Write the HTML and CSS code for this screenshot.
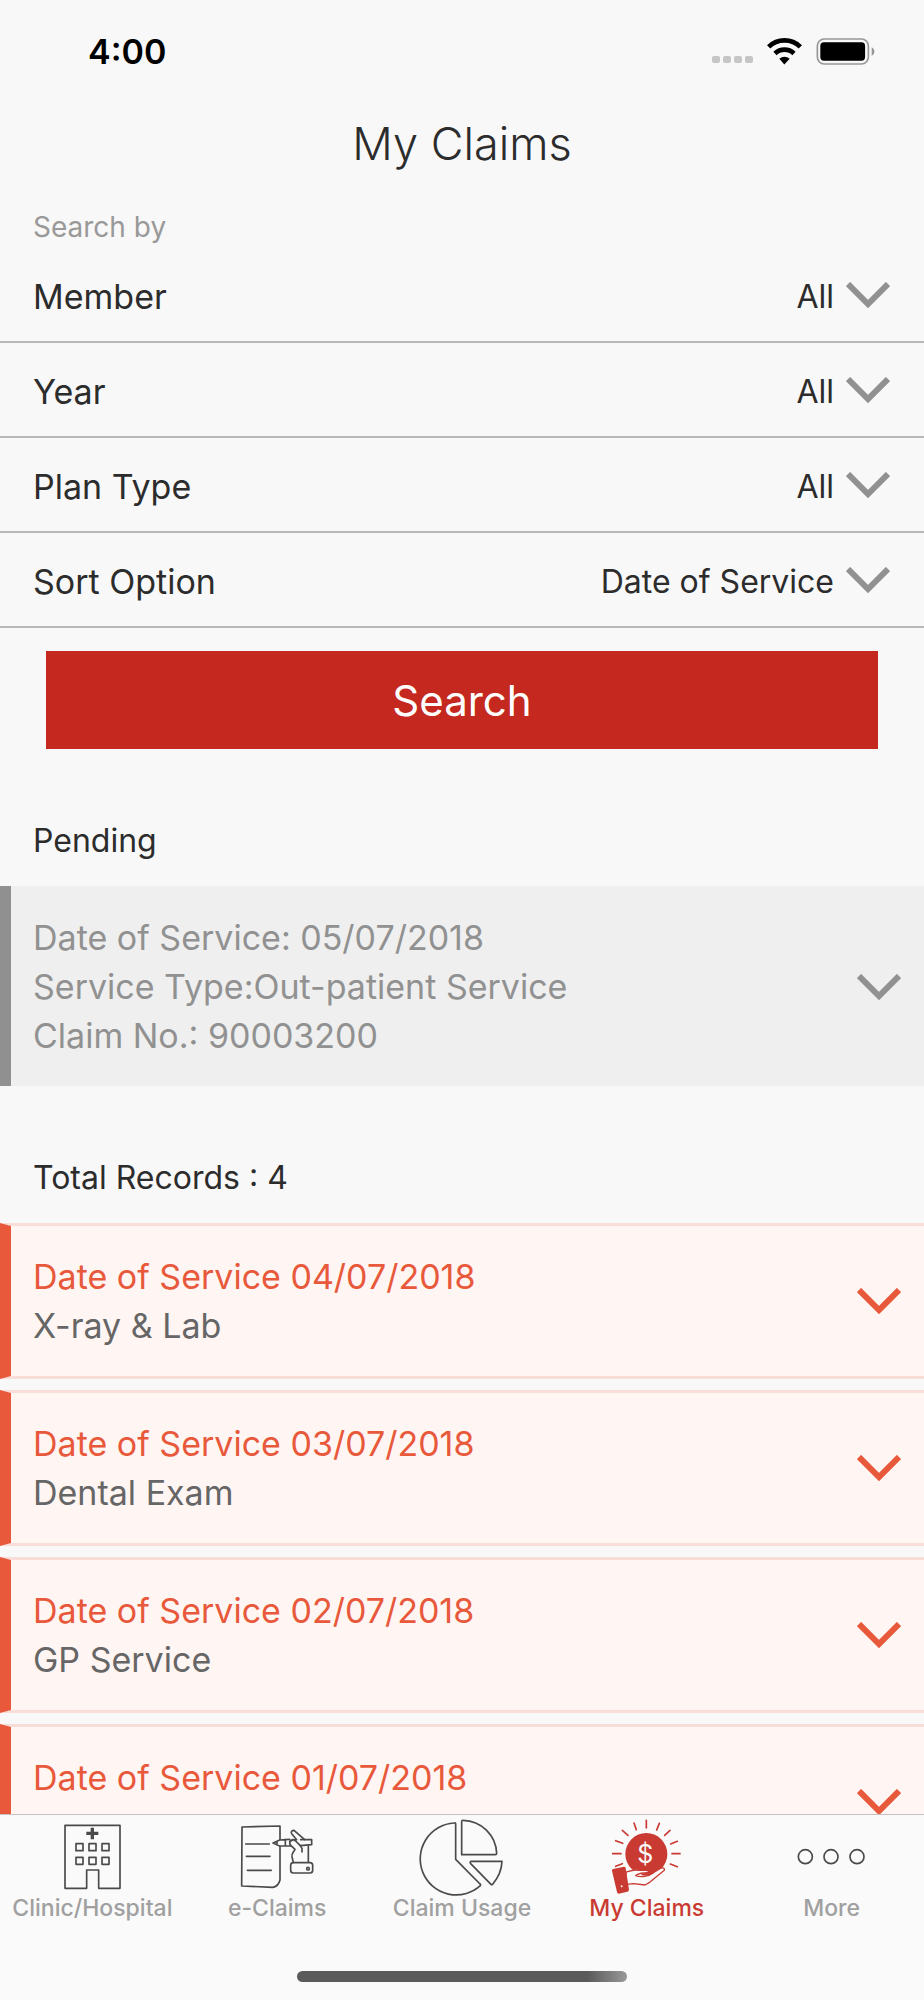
FILE: index.html
```html
<!DOCTYPE html>
<html lang="en">
<head>
<meta charset="utf-8">
<meta name="viewport" content="width=device-width, initial-scale=1">
<title>My Claims</title>
<link rel="stylesheet" href="styles.css">
</head>
<body>
<div class="app">
  <div class="status-bar">
    <span class="status-time">4:00</span>
    <svg class="status-signal" viewBox="0 0 42 7" aria-hidden="true">
      <rect x="0" width="8" height="7" rx="2"/><rect x="11" width="8" height="7" rx="2"/><rect x="22" width="8" height="7" rx="2"/><rect x="33" width="8" height="7" rx="2"/>
    </svg>
    <svg class="status-wifi" viewBox="0 0 105 80" aria-hidden="true">
      <path class="wifi-arc" d="M5 26a68 68 0 0 1 95 0M24 46a41 41 0 0 1 57 0"/>
      <path d="M37 62a23 23 0 0 1 31 0L52 79z"/>
    </svg>
    <svg class="status-battery" viewBox="0 0 177 82" aria-hidden="true">
      <rect class="battery-case" x="3" y="3" width="155" height="76" rx="21"/>
      <rect x="12" y="13" width="136" height="56" rx="11"/>
      <path class="battery-tip" d="M168 28v26c5-2 8-7 8-13s-3-11-8-13z"/>
    </svg>
  </div>

  <header class="title-bar"><h1>My Claims</h1></header>

  <main class="content">
    <form class="filters">
      <p class="filters-caption">Search by</p>
      <div class="filter-row">
        <label for="member">Member</label>
        <select id="member"><option>All</option></select>
        <svg class="chevron" viewBox="0 0 44 26" aria-hidden="true"><path d="M2 2l20 20L42 2"/></svg>
      </div>
      <div class="filter-row">
        <label for="year">Year</label>
        <select id="year"><option>All</option></select>
        <svg class="chevron" viewBox="0 0 44 26" aria-hidden="true"><path d="M2 2l20 20L42 2"/></svg>
      </div>
      <div class="filter-row">
        <label for="plan">Plan Type</label>
        <select id="plan"><option>All</option></select>
        <svg class="chevron" viewBox="0 0 44 26" aria-hidden="true"><path d="M2 2l20 20L42 2"/></svg>
      </div>
      <div class="filter-row">
        <label for="sort">Sort Option</label>
        <select id="sort"><option>Date of Service</option></select>
        <svg class="chevron" viewBox="0 0 44 26" aria-hidden="true"><path d="M2 2l20 20L42 2"/></svg>
      </div>
      <button class="search-button" type="button">Search</button>
    </form>

    <section class="claims">
      <h2>Pending</h2>
      <button class="claim claim-pending" type="button" aria-expanded="false">
        <span class="claim-text">
          <span>Date of Service: 05/07/2018</span>
          <span>Service Type:Out-patient Service</span>
          <span>Claim No.: 90003200</span>
        </span>
        <svg class="chevron" viewBox="0 0 44 26" aria-hidden="true"><path d="M2 2l20 20L42 2"/></svg>
      </button>
    </section>

    <section class="claims">
      <h2>Total Records : 4</h2>
      <button class="claim claim-record" type="button" aria-expanded="false">
        <span class="claim-text"><span class="claim-date">Date of Service 04/07/2018</span><span>X-ray &amp; Lab</span></span>
        <svg class="chevron" viewBox="0 0 44 26" aria-hidden="true"><path d="M2 2l20 20L42 2"/></svg>
      </button>
      <button class="claim claim-record" type="button" aria-expanded="false">
        <span class="claim-text"><span class="claim-date">Date of Service 03/07/2018</span><span>Dental Exam</span></span>
        <svg class="chevron" viewBox="0 0 44 26" aria-hidden="true"><path d="M2 2l20 20L42 2"/></svg>
      </button>
      <button class="claim claim-record" type="button" aria-expanded="false">
        <span class="claim-text"><span class="claim-date">Date of Service 02/07/2018</span><span>GP Service</span></span>
        <svg class="chevron" viewBox="0 0 44 26" aria-hidden="true"><path d="M2 2l20 20L42 2"/></svg>
      </button>
      <button class="claim claim-record" type="button" aria-expanded="false">
        <span class="claim-text"><span class="claim-date">Date of Service 01/07/2018</span></span>
        <svg class="chevron" viewBox="0 0 44 26" aria-hidden="true"><path d="M2 2l20 20L42 2"/></svg>
      </button>
    </section>
  </main>

  <nav class="tab-bar">
    <div class="tabs">
      <a class="tab" href="#clinic">
        <svg class="tab-icon" viewBox="145 45 264 237" aria-hidden="true">
          <path d="M261 265H196V76h165v189h-64v-55h-36z"/>
          <path d="M229 131h21v21h-21zM268 131h21v21h-21zM307 131h21v21h-21zM229 172h21v21h-21zM268 172h21v21h-21zM307 172h21v21h-21z"/>
          <path class="solid" d="M273 83h10v12h13v10h-13v13h-10v-13h-13V95h13z"/>
        </svg>
        Clinic/Hospital
      </a>
      <a class="tab" href="#eclaims">
        <svg class="tab-icon" viewBox="700 45 264 237" aria-hidden="true">
          <path d="M841 118V78l-114 3-1 177 93 4q17-2 22-22V140M738 132h71M740 169h71M743 211h72"/>
          <path d="M820 129l20-9 30-2M820 129l20 9h34M820 129l12-5v10zM857 119v19M903 119h33v15l-34 3"/>
          <path d="M915 119l-32-28c-7 0-10 5-7 10l15 18c-12-1-24 4-20 15l15 14c-5 10-12 13-9 23l4 16M870 125c2-8 12-7 18-2l14 14 5 8v11M926 138v49"/>
          <rect x="873" y="188" width="66" height="31" rx="8"/><circle cx="925" cy="206" r="4"/>
        </svg>
        e-Claims
      </a>
      <a class="tab" href="#usage">
        <svg class="tab-icon" viewBox="354 45 264 237" aria-hidden="true">
          <path d="M467 72q0-4-5-3a108 108 0 1 0 79 188q2-3-1-5l-73-74z"/>
          <path d="M485 64v100h101q4 0 4-4A103 103 0 0 0 489 61q-4 0-4 3zM513 184h93c-1 27-12 50-28 69q-3 2-5 0l-61-62q-3-6 1-7z"/>
        </svg>
        Claim Usage
      </a>
      <a class="tab tab-active" href="#claims" aria-current="page">
        <svg class="tab-icon" viewBox="68 45 264 237" aria-hidden="true">
          <path class="rays" d="M198 61v23M161 69l7 20M237 70l-8 20M126 91l17 15M269 91l-16 15M106 122l21 8M291 124l-20 8M97 161h25M275 161h24M106 199l20-8M291 200l-21-8"/>
          <circle class="solid" cx="198" cy="162" r="63"/>
          <path class="palm" d="M137 217c14-5 24-10 39-6h20c8 0 11 4 6 7l-17 6c12 3 26-1 34-6l21-13c8-3 14 0 12 6l-44 36-14 8-34-4-22 2z"/>
          <path d="M200 218c-15 2-24 0-34 9 16 6 38 3 53-9"/>
          <path class="solid" d="M98 207l33-7q4 0 5 4l10 65q0 5-5 6l-26 6q-4 0-5-5L95 212q0-4 3-5z"/>
          <circle class="cuff-button" cx="124" cy="259" r="3"/>
          <text class="coin" x="195" y="189">$</text>
        </svg>
        My Claims
      </a>
      <a class="tab" href="#more">
        <svg class="tab-icon" viewBox="623 45 264 237" aria-hidden="true">
          <circle cx="675" cy="170" r="21"/><circle cx="752" cy="170" r="21"/><circle cx="830" cy="170" r="21"/>
        </svg>
        More
      </a>
    </div>
    <div class="home-indicator"></div>
  </nav>
</div>
</body>
</html>
```
FILE: styles.css
```css
* { box-sizing: border-box; }

body {
  margin: 0;
  background: #f8f8f8;
  color: #2c2c2c;
  font-family: Inter, "Liberation Sans", sans-serif;
  font-size: 34px;
}

h1, h2, p { margin: 0; font-weight: 400; }

button, select { font: inherit; color: inherit; border: 0; background: none; }

.app {
  display: flex;
  flex-direction: column;
  height: 100vh;
}

/* Status bar */
.status-bar {
  flex: none;
  display: flex;
  align-items: center;
  height: 102px;
  padding: 0 49px 0 88px;
}
.status-time { margin-right: auto; color: #000; font-size: 34px; font-weight: 600; }
.status-signal { width: 42px; height: 7px; margin: 16px 13px 0 0; fill: #c6c6c6; }
.status-wifi { width: 35px; height: 27px; margin-right: 14px; }
.wifi-arc { fill: none; stroke: #000; stroke-width: 14; }
.status-battery { width: 59px; height: 27px; }
.battery-case { fill: none; stroke: #969696; stroke-width: 5; }
.battery-tip { fill: #969696; }

.title-bar { flex: none; text-align: center; }
.title-bar h1 { font-size: 45px; font-weight: 300; line-height: 84px; }

.content { flex: 1; min-height: 0; overflow: hidden; }

/* Search filters */
.filters-caption {
  padding: 23px 33px 3px;
  color: #999;
  font-size: 28px;
  line-height: 36px;
}
.filter-row {
  display: flex;
  align-items: center;
  height: 95px;
  padding: 0 34px 0 33px;
  border-bottom: 2px solid #b8b8b8;
}
.filter-row label { padding-top: 3px; }
.filter-row select {
  flex: 1;
  min-width: 0;
  height: 93px;
  margin: 0;
  padding: 4px 12px 0 0;
  appearance: none;
  font-size: 32px;
  text-align: right;
  text-align-last: right;
}
.chevron {
  flex: none;
  width: 44px;
  height: 26px;
  fill: none;
  stroke: #919191;
  stroke-width: 6;
}
.search-button {
  display: block;
  width: calc(100% - 92px);
  height: 98px;
  margin: 23px 46px 0;
  background: #c4281e;
  color: #fff;
  font-size: 42px;
}

/* Claim lists */
.claims { padding-top: 72px; }
.claims h2 {
  padding: 0 33px 25px;
  font-size: 32px;
  line-height: 40px;
}
.claim {
  display: flex;
  align-items: center;
  justify-content: space-between;
  width: 100%;
  text-align: left;
  line-height: 49px;
}
.claim-text { display: flex; flex-direction: column; align-self: flex-start; }
.claim-pending {
  padding: 27px 23px 26px 22px;
  border-left: 11px solid #909090;
  background: #efefef;
  color: #919191;
}
.claim-record {
  min-height: 156px;
  margin-bottom: 11px;
  padding: 26px 23px 26px 22px;
  border: solid #f9ddd8;
  border-width: 3px 0 3px 11px;
  border-left-color: #e8593b;
  background: #fff5f3;
  color: #666;
}
.claim-date { color: #e8593b; }
.claim-record .chevron { stroke: #e8593b; }

/* Tab bar */
.tab-bar {
  flex: none;
  border-top: 1px solid #c8c0c1;
  background: #fafafa;
}
.tabs { display: grid; grid-template-columns: repeat(5, 1fr); }
.tab {
  display: flex;
  flex-direction: column;
  align-items: center;
  color: #a0a0a0;
  font-size: 23px;
  font-weight: 500;
  line-height: 28px;
  text-decoration: none;
  white-space: nowrap;
}
.tab-icon {
  width: 88px;
  height: 79px;
  overflow: visible;
  fill: none;
  stroke: #4a4a4a;
  stroke-width: 5;
  stroke-linejoin: round;
  stroke-linecap: round;
}
.tab-icon .solid { fill: #4a4a4a; stroke: none; }
.tab-active { color: #c93b32; }
.tab-active .tab-icon { stroke: #c93b32; stroke-width: 4; }
.tab-active .solid { fill: #c93b32; }
.tab-active .rays { stroke-width: 5; }
.palm { fill: #fafafa; }
.tab-icon .cuff-button { fill: #fafafa; stroke: none; }
.coin { fill: #fafafa; stroke: none; font-size: 75px; font-weight: 400; text-anchor: middle; }

.home-indicator {
  width: 330px;
  height: 11px;
  margin: 49px auto 18px;
  border-radius: 6px;
  background: linear-gradient(90deg, #5a5a5a 88%, #999);
}
```
